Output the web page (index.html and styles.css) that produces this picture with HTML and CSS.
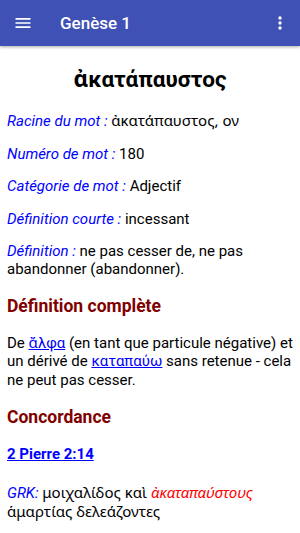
FILE: index.html
```html
<!DOCTYPE html>
<html lang="fr">
<head>
    <meta charset="UTF-8">
    <meta name="viewport" content="width=device-width, initial-scale=1.0">
    <title>Genèse 1</title>
    <link rel="stylesheet" href="styles.css">
</head>
<body>
    <header class="toolbar">
        <button class="icon-btn menu-btn" aria-label="Menu">
            <svg width="20" height="20" viewBox="0 0 24 24"><path d="M3 18h18v-2H3v2zm0-5h18v-2H3v2zm0-7v2h18V6H3z" fill="#fff"/></svg>
        </button>
        <div class="toolbar-title">Genèse 1</div>
        <button class="icon-btn more-btn" aria-label="Plus">
            <svg width="20" height="20" viewBox="0 0 24 24"><circle cx="12" cy="6" r="2" fill="#fff"/><circle cx="12" cy="12" r="2" fill="#fff"/><circle cx="12" cy="18" r="2" fill="#fff"/></svg>
        </button>
    </header>

    <main class="content">
        <h2 class="word">ἀκατάπαυστος</h2>

        <p class="field"><span class="label">Racine du mot :</span> <span class="gr">ἀκατάπαυστος, ον</span></p>
        <p class="field"><span class="label">Numéro de mot :</span> 180</p>
        <p class="field"><span class="label">Catégorie de mot :</span> Adjectif</p>
        <p class="field"><span class="label">Définition courte :</span> incessant</p>
        <p class="field"><span class="label">Définition :</span> ne pas cesser de, ne pas abandonner (abandonner).</p>

        <h3 class="section-title">Définition complète</h3>
        <p class="field tall">De <a href="#" class="greek-link">ἄλφα</a> (en tant que particule négative) et un dérivé de <a href="#" class="greek-link">καταπαύω</a> sans retenue - cela ne peut pas cesser.</p>

        <h3 class="section-title">Concordance</h3>
        <h4 class="verse-ref"><a href="#">2 Pierre 2:14</a></h4>
        <p class="field tall"><span class="label">GRK:</span> <span class="gr">μοιχαλίδος καὶ <span class="match">ἀκαταπαύστους</span> ἁμαρτίας δελεάζοντες</span></p>
    </main>
</body>
</html>
```

FILE: styles.css
```css
body {
    font-family: Roboto, "Noto Sans", sans-serif;
    font-size: 15px;
    color: #000;
    background-color: #fff;
    margin: 0;
    padding: 0;
}
.toolbar {
    height: 46px;
    background-color: #3f51b5;
    display: flex;
    align-items: center;
    box-shadow: 0 1px 3px rgba(0,0,0,0.35);
    position: relative;
}
.icon-btn {
    background: none;
    border: none;
    padding: 0;
    width: 20px;
    height: 20px;
    display: flex;
}
.menu-btn {
    margin-left: 13px;
}
.more-btn {
    margin-left: auto;
    margin-right: 10px;
}
.toolbar-title {
    color: #fff;
    font-size: 17px;
    font-weight: 500;
    margin-left: 27px;
}
.content {
    padding: 0 7px;
}
.word {
    text-align: center;
    font-size: 22.5px;
    line-height: 26px;
    font-weight: bold;
    margin: 19.5px 0 20.5px;
}
.field {
    line-height: 17.5px;
    margin: 15px 0;
}
.field.tall {
    line-height: 18.5px;
}
.gr {
    font-family: "Noto Sans", Roboto, sans-serif;
}
.label {
    color: #00f;
    font-style: italic;
}
.section-title {
    color: #800000;
    font-size: 17.5px;
    line-height: 20.5px;
    font-weight: bold;
    margin: 17.5px 0;
}
.greek-link {
    color: #00f;
}
.verse-ref {
    font-size: 15px;
    line-height: 17.5px;
    margin: 19px 0;
}
.verse-ref a {
    color: #00f;
}
.match {
    color: #f00;
    font-style: italic;
}
```
